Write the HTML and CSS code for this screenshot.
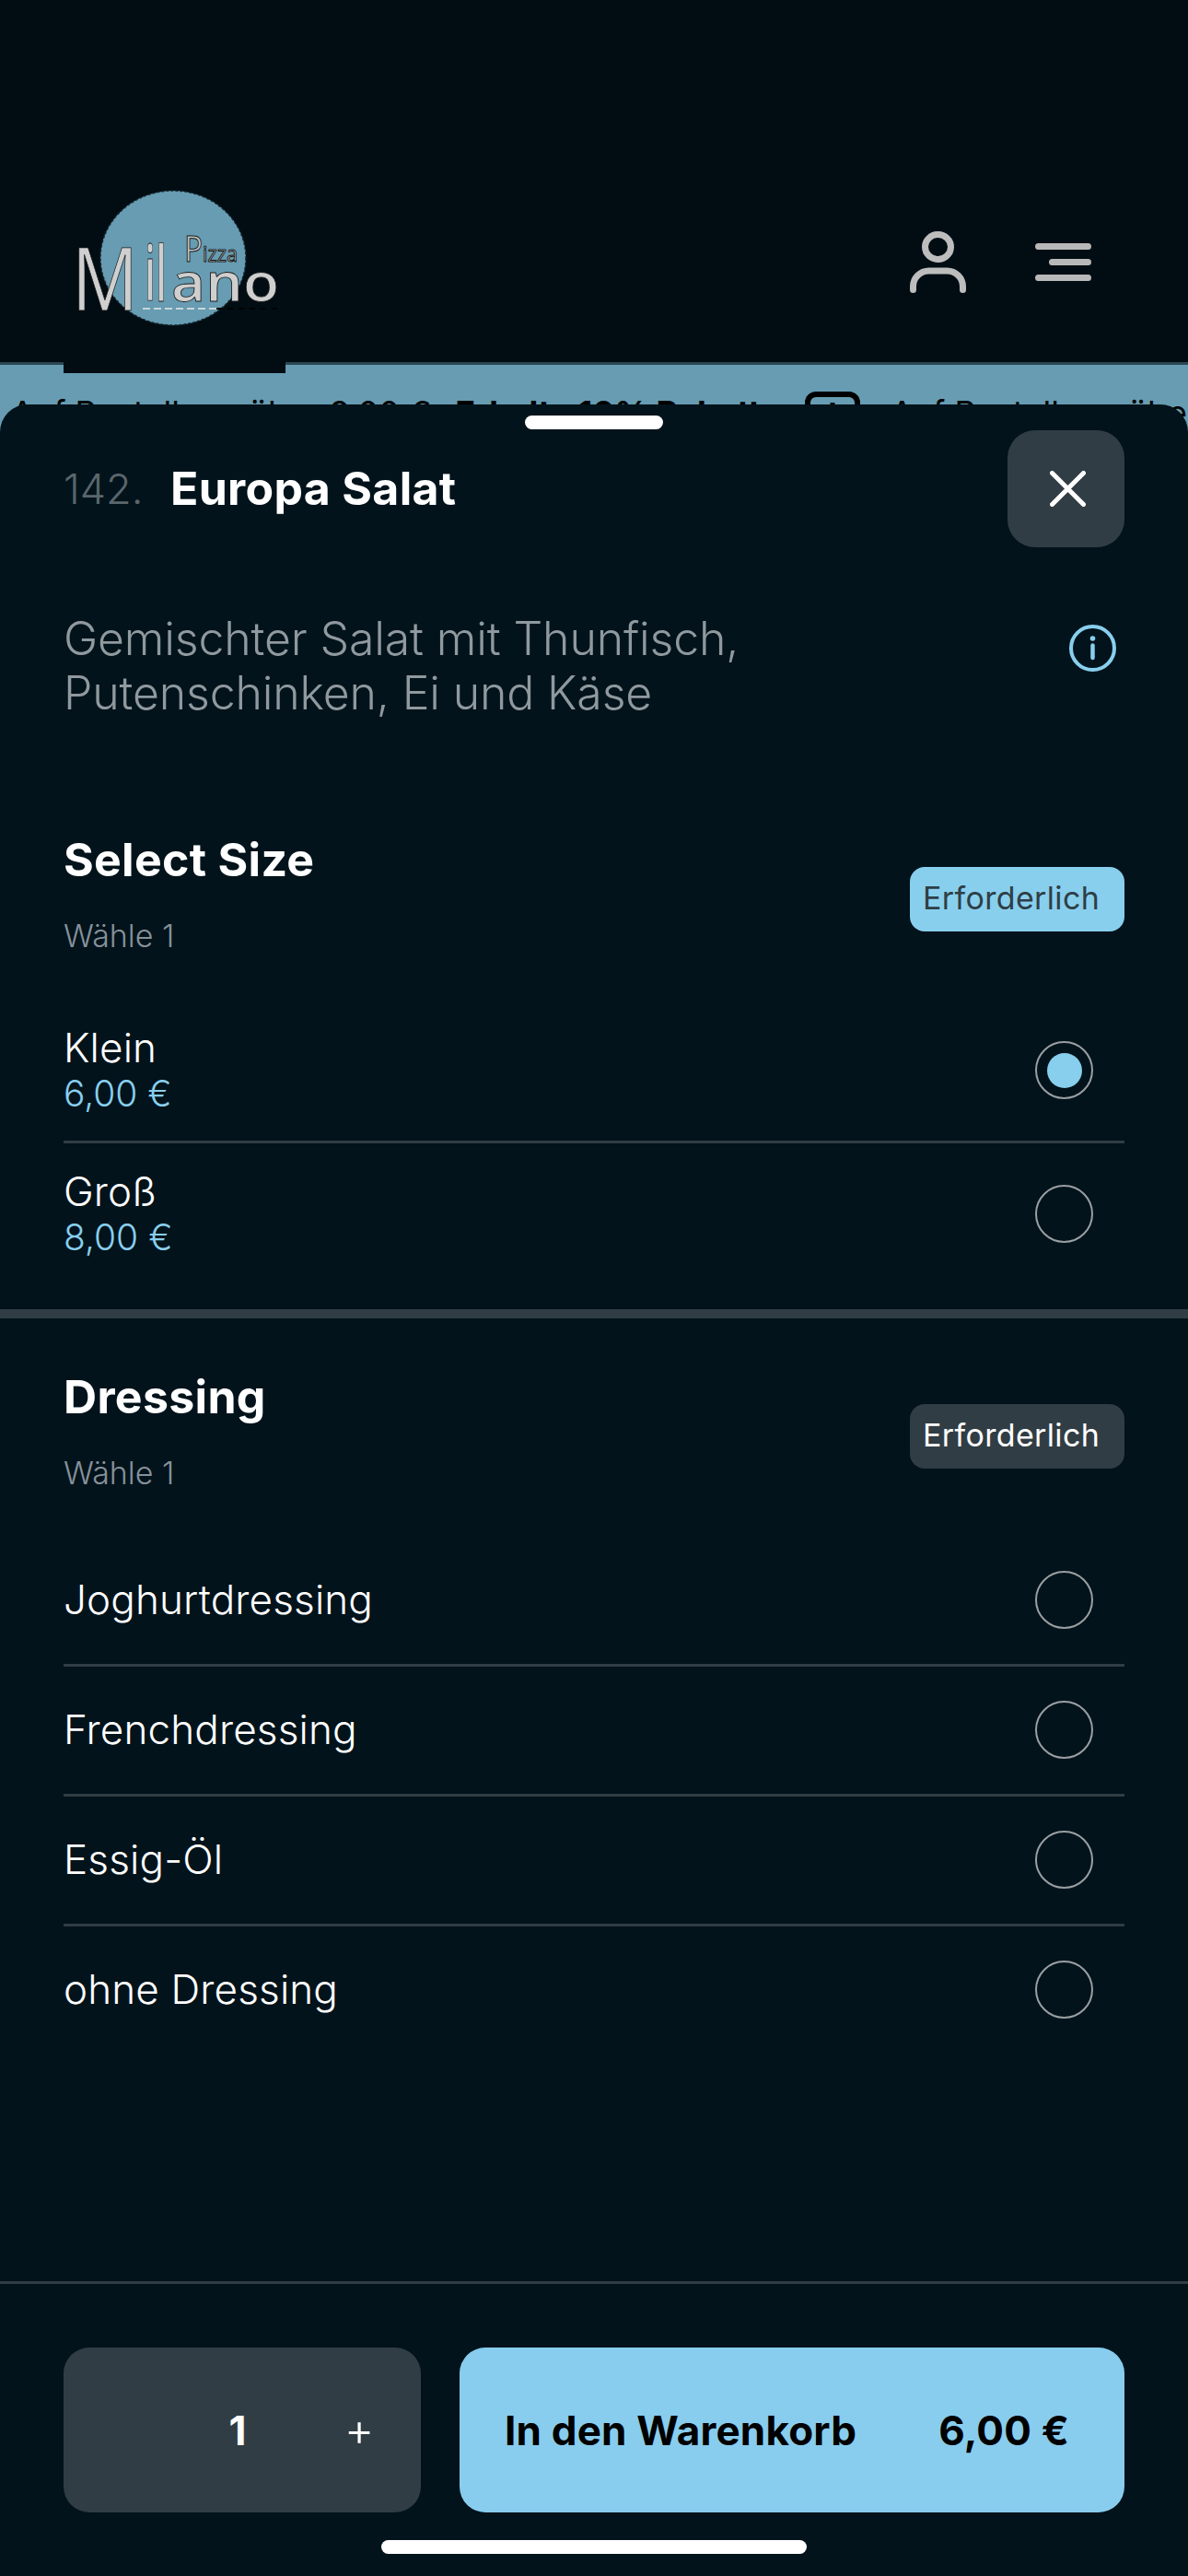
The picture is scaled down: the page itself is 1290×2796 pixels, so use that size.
FILE: index.html
```html
<!DOCTYPE html>
<html lang="de">
<head>
	<meta charset="utf-8">
	<title>Europa Salat</title>
	<link rel="stylesheet" href="styles.css">
</head>
<body>
	<div class="page">
		<header class="top">
			<div class="logo">
				<svg width="241" height="215" viewBox="0 0 241 215">
					<ellipse cx="119" cy="90" rx="79" ry="73" fill="#679cb2" stroke="#16262e" stroke-width="1.5" stroke-dasharray="3 2"/>
					<line x1="86" y1="145" x2="166" y2="145" stroke="#c9d5da" stroke-width="2" stroke-dasharray="8 4"/>
					<line x1="166" y1="145" x2="236" y2="145" stroke="#000" stroke-width="2" stroke-dasharray="6 6"/>
					<text class="logo-small" x="131" y="94"><tspan font-size="38" textLength="20" lengthAdjust="spacingAndGlyphs">P</tspan><tspan font-size="23" textLength="38" lengthAdjust="spacingAndGlyphs">izza</tspan></text>
					<text class="logo-big" y="137"><tspan x="9" dy="10" font-size="96" font-weight="400" textLength="72" lengthAdjust="spacingAndGlyphs">M</tspan><tspan x="88" dy="-10" font-size="84" textLength="24" lengthAdjust="spacingAndGlyphs">il</tspan><tspan x="117" font-size="58" textLength="117" lengthAdjust="spacingAndGlyphs">ano</tspan></text>
				</svg>
			</div>
			<div class="top-icons">
				<svg width="61" height="67" viewBox="0 0 61 67" fill="none" stroke="#bdbdbd" stroke-width="7" stroke-linecap="round">
					<ellipse cx="30.5" cy="17" rx="14" ry="13.5"/>
					<path d="M3.5 63.5V60A17 17 0 0 1 20.5 43H40.5A17 17 0 0 1 57.5 60V63.5"/>
				</svg>
				<svg class="menu-icon" width="61" height="41" viewBox="0 0 61 41" fill="none" stroke="#b8b8b8" stroke-width="7" stroke-linecap="round">
					<path d="M3.5 3.5H57.5M18.5 20.5H57.5M3.5 37.5H57.5"/>
				</svg>
			</div>
		</header>

		<div class="strip">
			<span>Auf Bestellung über 9,00 €</span>
			<b>Erhalte 10% Rabatt</b>
			<svg width="60" height="60" viewBox="0 0 60 60" fill="none" stroke="#000" stroke-width="6">
				<rect x="3" y="3" width="54" height="54" rx="9"/>
				<path d="M30 12V45M18 30H42" stroke-width="5"/>
			</svg>
			<span>Auf Bestellung über 9,00 €</span>
		</div>

		<main class="sheet">
			<div class="handle"></div>
			<div class="title-row">
				<span class="num">142.</span>
				<h1>Europa Salat</h1>
				<button type="button" class="close">
					<svg width="39" height="39" viewBox="0 0 39 39" fill="none" stroke="#fff" stroke-width="5" stroke-linecap="round">
						<path d="M2.5 2.5L36.5 36.5M36.5 2.5L2.5 36.5"/>
					</svg>
				</button>
			</div>

			<div class="desc-row">
				<p>Gemischter Salat mit Thunfisch, Putenschinken, Ei und Käse</p>
				<svg width="51" height="51" viewBox="0 0 51 51" fill="none" stroke="#88cfee" stroke-width="4">
					<circle cx="25.5" cy="25.5" r="23.5"/>
					<path d="M25.5 22.5V36" stroke-width="4.5" stroke-linecap="round"/>
					<circle cx="25.5" cy="15" r="2.8" fill="#88cfee" stroke="none"/>
				</svg>
			</div>

			<section class="group group-size">
				<div class="group-head">
					<div>
						<h2>Select Size</h2>
						<div class="sub">Wähle 1</div>
					</div>
					<span class="badge active">Erforderlich</span>
				</div>
				<div class="opt opt-price">
					<div>
						<div class="opt-name">Klein</div>
						<div class="opt-cost">6,00 €</div>
					</div>
					<span class="radio checked"></span>
				</div>
				<div class="opt opt-price">
					<div>
						<div class="opt-name">Groß</div>
						<div class="opt-cost">8,00 €</div>
					</div>
					<span class="radio"></span>
				</div>
			</section>

			<section class="group">
				<div class="group-head">
					<div>
						<h2>Dressing</h2>
						<div class="sub">Wähle 1</div>
					</div>
					<span class="badge">Erforderlich</span>
				</div>
				<div class="opt">
					<div class="opt-name">Joghurtdressing</div>
					<span class="radio"></span>
				</div>
				<div class="opt">
					<div class="opt-name">Frenchdressing</div>
					<span class="radio"></span>
				</div>
				<div class="opt">
					<div class="opt-name">Essig-Öl</div>
					<span class="radio"></span>
				</div>
				<div class="opt">
					<div class="opt-name">ohne Dressing</div>
					<span class="radio"></span>
				</div>
			</section>

			<footer class="bottom">
				<div class="actions">
					<div class="qty">
						<span></span>
						<span class="qty-num">1</span>
						<span class="qty-plus">+</span>
					</div>
					<button type="button" class="add">
						<span>In den Warenkorb</span>
						<span>6,00 €</span>
					</button>
				</div>
				<div class="home"></div>
			</footer>
		</main>
	</div>
</body>
</html>
```

FILE: styles.css
```css
*{
	margin: 0px;
	padding: 0px;
	box-sizing: border-box;
}
body{
	background: #010d13;
	font-family: "Inter", "Liberation Sans", sans-serif;
	color: #fff;
}
.page{
	position: relative;
	height: 2796px;
	overflow: hidden;
}

/* page behind the sheet */
.top{
	display: flex;
	justify-content: space-between;
	align-items: flex-end;
	height: 396px;
	padding: 0 105px 0 69px;
	border-bottom: 3px solid #2b4652;
}
.logo{
	position: relative;
	z-index: 1;
	height: 215px;
	margin-bottom: -12px;
	background: #010d13;
}
.logo svg{
	display: block;
}
.logo-big{
	font-family: "Open Sans", sans-serif;
	font-weight: 600;
	fill: #cfcfcf;
	stroke: #1a1a1a;
	stroke-width: 0.8;
}
.logo-small{
	font-family: "Open Sans", sans-serif;
	fill: #c4c9cb;
	stroke: #1a1a1a;
	stroke-width: 1;
}
.top-icons{
	display: flex;
	align-items: flex-start;
	gap: 75px;
	height: 142px;
}
.menu-icon{
	margin-top: 13px;
}
.strip{
	display: flex;
	align-items: center;
	gap: 15px;
	height: 104px;
	padding-left: 12px;
	background: #679cb2;
	color: #000;
	font-size: 36px;
	white-space: nowrap;
}
.strip b{
	margin-left: 11px;
}
.strip svg{
	flex: none;
	margin: 14px 18px 0 33px;
}

/* bottom sheet */
.sheet{
	position: absolute;
	top: 439px;
	left: 0;
	right: 0;
	bottom: 0;
	display: flex;
	flex-direction: column;
	background: #02131b;
	border-radius: 30px 30px 0 0;
}
.handle{
	width: 150px;
	height: 15px;
	margin: 12px auto 0;
	background: #fff;
	border-radius: 8px;
}
.title-row{
	display: flex;
	align-items: center;
	height: 127px;
	margin-top: 1px;
	padding: 0 69px;
}
.num{
	width: 116px;
	font-size: 45px;
	font-weight: 300;
	color: #5a666c;
}
.title-row h1{
	flex: 1;
	margin-bottom: 2px;
	font-size: 50px;
	font-weight: 700;
	line-height: 60px;
	letter-spacing: 0.3px;
}
.close{
	display: flex;
	align-items: center;
	justify-content: center;
	width: 127px;
	height: 127px;
	padding-left: 4px;
	background: #313d44;
	border: none;
	border-radius: 30px;
}
.desc-row{
	display: flex;
	justify-content: space-between;
	align-items: flex-start;
	padding: 70px 78px 0 69px;
}
.desc-row p{
	width: 780px;
	font-size: 50px;
	font-weight: 300;
	line-height: 59px;
	letter-spacing: -0.15px;
	color: #8f999e;
}
.desc-row svg{
	margin-top: 14px;
}
.group{
	padding: 55px 69px 0 69px;
}
.group-size{
	padding-top: 121px;
	padding-bottom: 27px;
	border-bottom: 10px solid #313d44;
}
.group-head{
	display: flex;
	justify-content: space-between;
	align-items: flex-start;
	margin-bottom: 49px;
}
.group-head h2{
	font-size: 50px;
	font-weight: 700;
	line-height: 60px;
	letter-spacing: 0.3px;
}
.sub{
	margin-top: 33px;
	font-size: 34px;
	font-weight: 300;
	line-height: 40px;
	color: #87919a;
}
.badge{
	width: 233px;
	height: 70px;
	margin-top: 38px;
	padding-left: 14px;
	background: #313d44;
	border-radius: 16px;
	font-size: 34px;
	line-height: 68px;
	letter-spacing: 0.35px;
	color: #fff;
}
.badge.active{
	background: #88cfee;
	color: #2f3e46;
}
.opt{
	display: flex;
	justify-content: space-between;
	align-items: center;
	height: 141px;
	padding: 0 34px 2px 0;
	border-bottom: 3px solid #313d44;
}
.opt-price{
	height: 156px;
	padding-bottom: 0;
}
.opt:last-child{
	height: 138px;
	border-bottom: none;
}
.opt-price:last-child{
	height: 153px;
}
.opt-name{
	font-size: 44px;
	font-weight: 300;
	line-height: 50px;
	letter-spacing: 0.15px;
}
.opt-cost{
	margin-top: 1px;
	font-size: 39px;
	font-weight: 300;
	line-height: 48px;
	color: #88cfee;
}
.radio{
	display: flex;
	align-items: center;
	justify-content: center;
	width: 63px;
	height: 63px;
	border: 2px solid #9a9fa2;
	border-radius: 50%;
}
.radio.checked::after{
	content: "";
	width: 38px;
	height: 38px;
	background: #88cfee;
	border-radius: 50%;
}
.bottom{
	margin-top: auto;
	height: 320px;
	padding-top: 69px;
	border-top: 3px solid #313d44;
}
.actions{
	display: flex;
	gap: 42px;
	padding: 0 69px;
}
.qty{
	display: grid;
	grid-template-columns: 124px 130px 1fr;
	align-items: center;
	justify-items: center;
	width: 388px;
	height: 179px;
	background: #313d44;
	border-radius: 28px;
}
.qty-num{
	font-size: 44px;
	font-weight: 700;
}
.qty-plus{
	margin-bottom: 2px;
	font-size: 50px;
	font-weight: 300;
}
.add{
	flex: 1;
	display: flex;
	justify-content: space-between;
	align-items: center;
	padding: 0 60px 0 49px;
	background: #88cdee;
	border: none;
	border-radius: 28px;
	font-family: inherit;
	font-size: 44px;
	font-weight: 700;
	letter-spacing: 0.2px;
	color: #000;
}
.home{
	width: 462px;
	height: 15px;
	margin: 30px auto 0;
	background: #fff;
	border-radius: 8px;
}
```
